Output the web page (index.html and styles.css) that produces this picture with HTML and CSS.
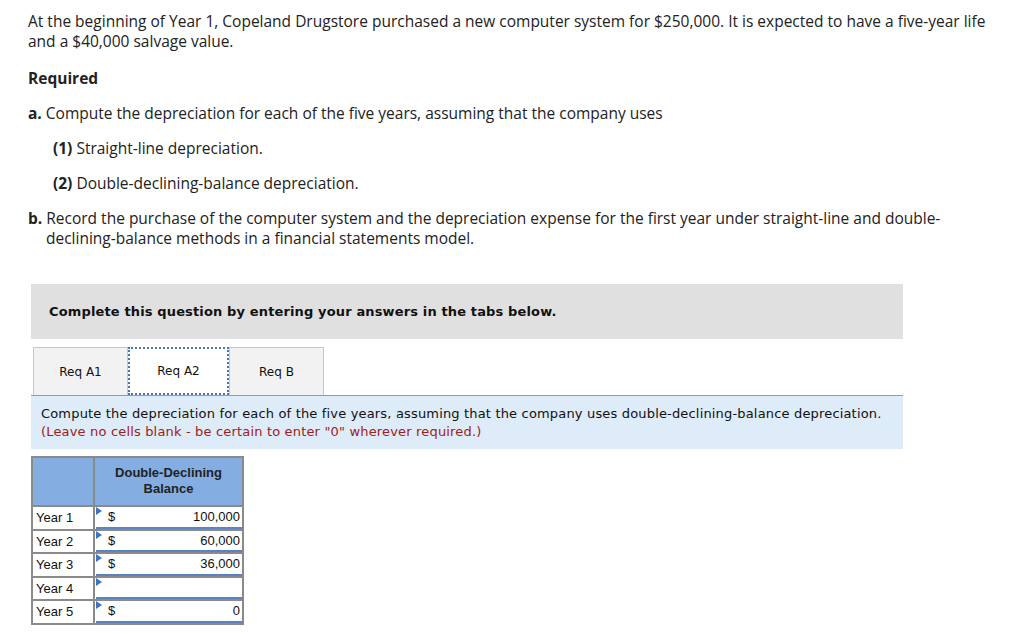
FILE: index.html
```html
<!DOCTYPE html>
<html>
<head>
<meta charset="utf-8">
<link rel="stylesheet" href="styles.css">
</head>
<body>
<div class="problem">
  <p class="intro">At the beginning of Year 1, Copeland Drugstore purchased a new computer system for $250,000. It is expected to have a five-year life and a $40,000 salvage value.</p>
  <p class="req"><b>Required</b></p>
  <p class="item"><b>a.</b> Compute the depreciation for each of the five years, assuming that the company uses</p>
  <p class="sub"><b>(1)</b> Straight-line depreciation.</p>
  <p class="sub"><b>(2)</b> Double-declining-balance depreciation.</p>
  <p class="item hang"><b>b.</b> Record the purchase of the computer system and the depreciation expense for the first year under straight-line and double-declining-balance methods in a financial statements model.</p>
</div>

<div class="widget">
  <div class="banner">Complete this question by entering your answers in the tabs below.</div>
  <div class="tabs">
    <div class="tab">Req A1</div>
    <div class="tab active">Req A2</div>
    <div class="tab">Req B</div>
  </div>
  <div class="instr">
    <div>Compute the depreciation for each of the five years, assuming that the company uses double-declining-balance depreciation.</div>
    <div class="warn">(Leave no cells blank - be certain to enter "0" wherever required.)</div>
  </div>

  <table class="grid">
    <thead>
      <tr><th class="blank"></th><th class="hcol">Double-Declining<br>Balance</th></tr>
    </thead>
    <tbody>
      <tr><td class="lbl">Year 1</td><td class="inp"><div class="box"><span class="flag"></span><span class="cur">$</span><span class="val">100,000</span></div></td></tr>
      <tr><td class="lbl">Year 2</td><td class="inp"><div class="box"><span class="flag"></span><span class="cur">$</span><span class="val">60,000</span></div></td></tr>
      <tr><td class="lbl">Year 3</td><td class="inp"><div class="box"><span class="flag"></span><span class="cur">$</span><span class="val">36,000</span></div></td></tr>
      <tr><td class="lbl">Year 4</td><td class="inp"><div class="box"><span class="flag"></span><span class="cur"></span><span class="val"></span></div></td></tr>
      <tr><td class="lbl">Year 5</td><td class="inp"><div class="box"><span class="flag"></span><span class="cur">$</span><span class="val">0</span></div></td></tr>
    </tbody>
  </table>
</div>
</body>
</html>
```

FILE: styles.css
```css
html, body {
  margin: 0;
  padding: 0;
  background: #fff;
}

body {
  font-family: "Open Sans", Lato, sans-serif;
  color: #222;
}

.problem {
  width: 965px;
  padding: 11px 0 0 28px;
  font-size: 15.5px;
  line-height: 20px;
}

.problem p {
  margin: 0 0 15px 0;
}

.problem .intro {
  margin-bottom: 17px;
}

.problem b {
  font-weight: 700;
}

.problem .sub {
  padding-left: 25px;
}

.problem .hang {
  padding-left: 18px;
  text-indent: -18px;
}

.widget {
  margin: 36px 0 0 31px;
  width: 872px;
}

.banner {
  background: #e0e0e0;
  height: 55px;
  padding-left: 18px;
  display: flex;
  align-items: center;
  font-family: "DejaVu Sans", Verdana, sans-serif;
  font-weight: bold;
  font-size: 13px;
  letter-spacing: 0.14px;
  color: #111;
}

.tabs {
  display: flex;
  margin-top: 8px;
  padding-left: 2px;
}

.tab {
  width: 93px;
  height: 47px;
  background: #f2f2f2;
  border: 1px solid #c8c8c8;
  border-bottom: none;
  display: flex;
  align-items: center;
  justify-content: center;
  font-family: "DejaVu Sans", Verdana, sans-serif;
  font-size: 12px;
  color: #111;
}

.tab.active {
  width: 97px;
  height: 44px;
  background: #fff;
  border: 2px dotted #4a76b8;
}

.instr {
  background: #deebf8;
  border-top: 1px solid #9a9a9a;
  padding: 9px 10px 8px 10px;
  font-family: "DejaVu Sans", Verdana, sans-serif;
  font-size: 13px;
  line-height: 18px;
  letter-spacing: 0.17px;
  color: #111;
}

.instr .warn {
  color: #a02020;
}

.grid {
  margin-top: 7px;
  border-collapse: collapse;
  font-family: "Liberation Sans", Arial, sans-serif;
  font-size: 13px;
  color: #111;
}

.grid th {
  background: #84aee2;
  border: 2px solid #8a8a8a;
  height: 40px;
  padding: 0;
}

.grid th.blank {
  width: 60px;
}

.grid th.hcol {
  width: 147px;
  font-weight: bold;
  line-height: 16px;
  vertical-align: top;
  padding-top: 7px;
  color: #222;
}

.grid td {
  border: 2px solid #8a8a8a;
  height: 20.5px;
  padding: 0;
}

.grid td.lbl {
  padding-left: 3px;
}

.grid td.inp {
  padding: 0;
}

.box {
  position: relative;
  display: flex;
  align-items: center;
  height: 19.5px;
  background: #fff;
  border-bottom: 2px solid #5a84c0;
  margin: 0 0 0 1px;
}

.flag {
  position: absolute;
  left: 0;
  top: 0;
  width: 0;
  height: 0;
  border-left: 6px solid #3e73c0;
  border-bottom: 4px solid transparent;
  border-top: 4px solid transparent;
}

.cur {
  width: 14px;
  margin-left: 12px;
}

.val {
  flex: 1;
  text-align: right;
  padding-right: 2px;
}
```
